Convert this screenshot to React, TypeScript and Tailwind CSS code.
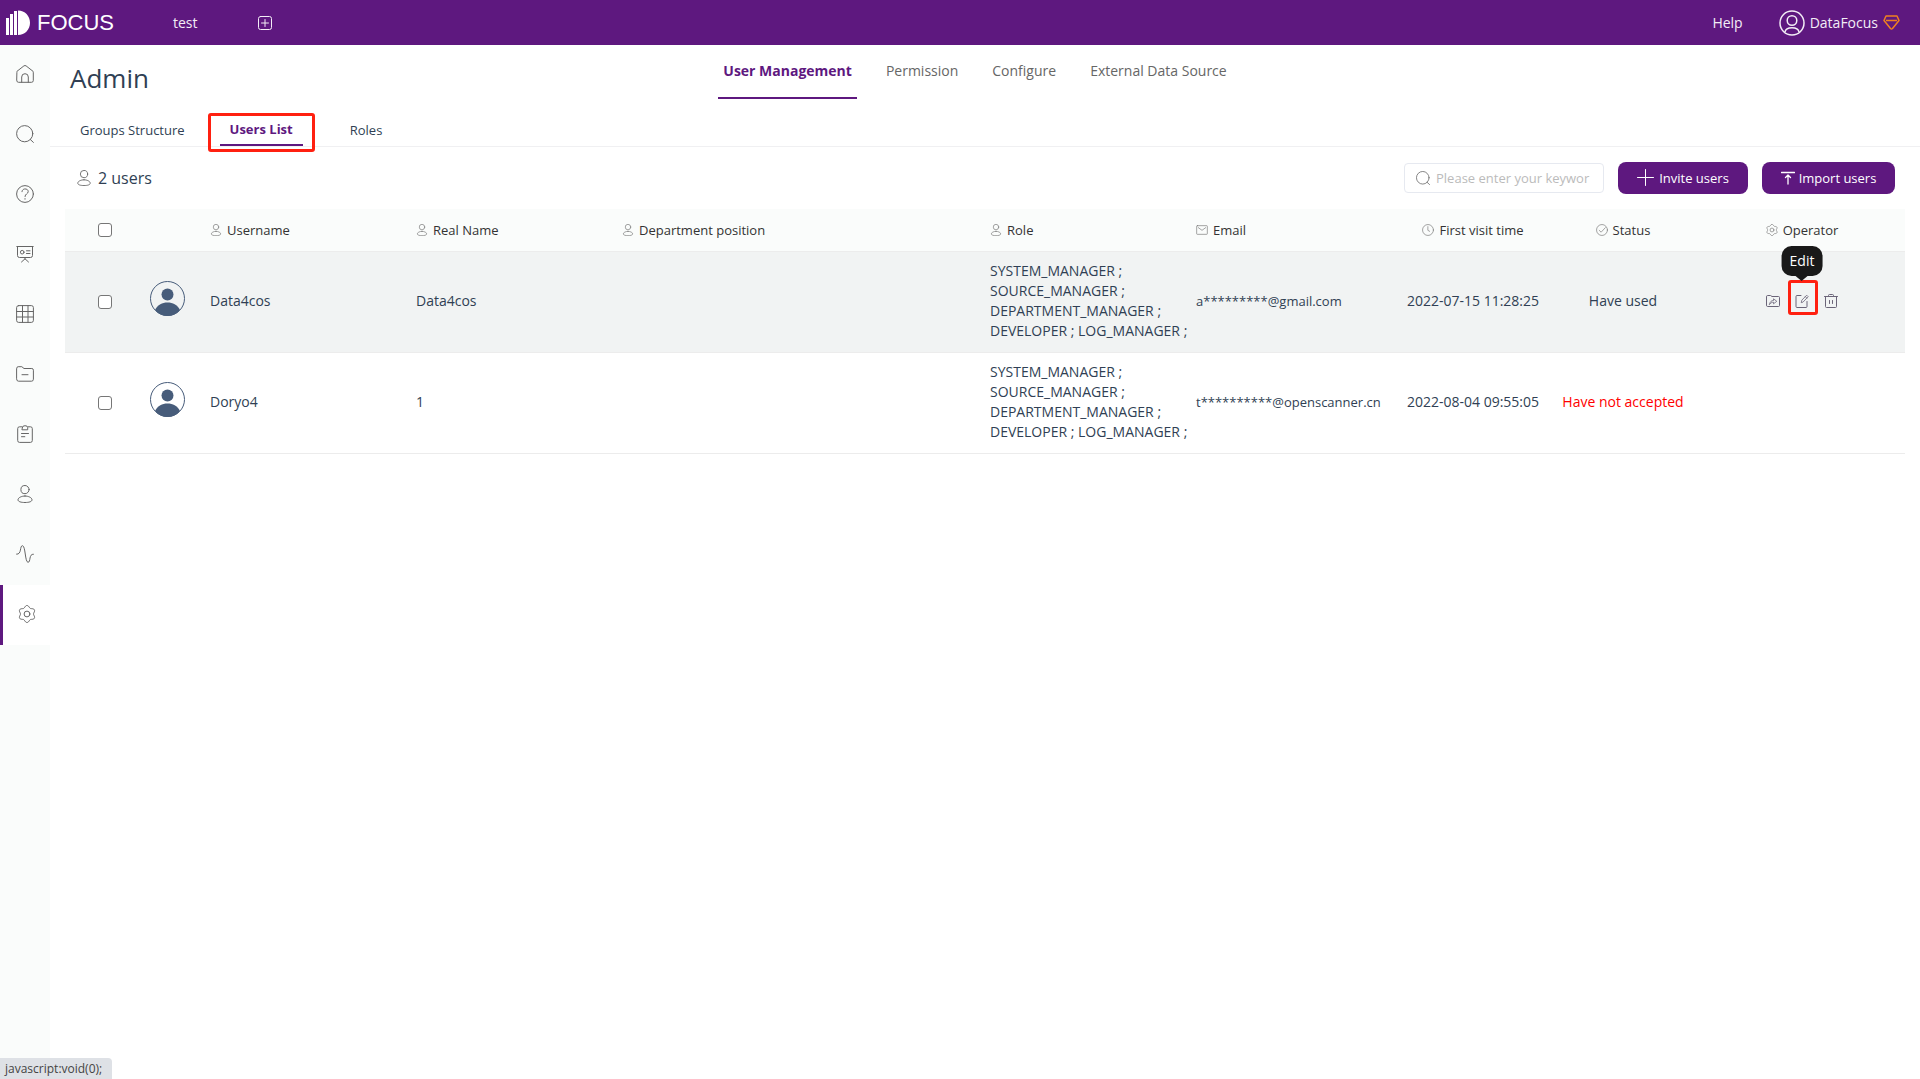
import type { ReactNode } from "react";

type IconProps = { className?: string };

function Svg({ className = "size-[18px]", box = 18, children }: IconProps & { box?: number; children: ReactNode }) {
  return (
    <svg
      className={`shrink-0 ${className}`}
      viewBox={`0 0 ${box} ${box}`}
      fill="none"
      stroke="currentColor"
      strokeWidth="1"
      strokeLinecap="round"
      strokeLinejoin="round"
      aria-hidden="true"
    >
      {children}
    </svg>
  );
}

const HomeIcon = (p: IconProps) => (
  <Svg {...p}>
    <path d="M.7 7.2Q.5 6.800 1 6.300L7.900.9Q9 .1 10.100.9L17 6.300Q17.500 6.800 17.300 7.200V15.500Q17.300 17.300 15.500 17.300H2.500Q.7 17.300.7 15.500Z" />
    <path d="M5.700 17.200V12a3.300 3.300 0 0 1 6.600 0V17.200" />
  </Svg>
);
const SearchIcon = (p: IconProps) => (
  <Svg {...p}>
    <circle cx="8.700" cy="8.700" r="8.100" />
    <path d="M14.300 14.500 17.400 17.400" />
  </Svg>
);
const HelpIcon = (p: IconProps) => (
  <Svg {...p}>
    <circle cx="9" cy="9" r="8.400" />
    <path d="M6 6.700C6 2.900 12.200 3 12.200 6.600 12.200 9 9 8.700 9 11.500M9 13.600V14.200" />
  </Svg>
);
const BoardIcon = (p: IconProps) => (
  <Svg {...p}>
    <path d="M.8 1.500H17.200M1.500 1.500V10.500Q1.500 12.500 3.500 12.500H14.500Q16.500 12.500 16.500 10.500V1.500M9 12.500V14M5.500 17 9 13.800 12.500 17" />
    <circle cx="6.200" cy="7.200" r="1.800" />
    <path d="M10.500 5.800H14M10.500 8.500H14" />
  </Svg>
);
const GridIcon = (p: IconProps) => (
  <Svg {...p}>
    <rect x=".6" y=".6" width="16.800" height="16.800" rx="2" />
    <path d="M6.500.6V17.400M12 .6V17.400M.6 6.500H17.400M.6 12H17.400" />
  </Svg>
);
const FolderIcon = (p: IconProps) => (
  <Svg {...p}>
    <path d="M.6 3.500Q.6 1.700 2.200 1.700H5.800L8 3.500H15.800Q17.400 3.500 17.400 5.200V14.200Q17.400 16.200 15.500 16.200H2.500Q.6 16.200.6 14.200ZM6 9.700H12" />
  </Svg>
);
const ClipboardIcon = (p: IconProps) => (
  <Svg {...p}>
    <path d="M6 1.800H3.500Q1.700 1.800 1.700 3.600V15.500Q1.700 17.400 3.500 17.400H14.500Q16.300 17.400 16.300 15.500V3.600Q16.300 1.800 14.500 1.800H12" />
    <path d="M6.300 2.600Q6.300.7 9 .7T11.700 2.600V4.800H6.300ZM5.500 8.500H12.500M5.500 11.700H8.800" />
  </Svg>
);
const PersonIcon = (p: IconProps) => (
  <Svg {...p}>
    <circle cx="9" cy="4.600" r="4.100" />
    <path d="M9 11C5.500 11 2 12.700 2 14.800 2 16.700 5.200 17.500 9 17.500S16 16.700 16 14.800C16 12.700 12.500 11 9 11Z" />
  </Svg>
);
const PulseIcon = (p: IconProps) => (
  <Svg {...p}>
    <path d="M.6 9.200C6 9.700 3.500.7 6.500.7S9 17.300 12 17.300C15 17.300 12.500 8.700 17.400 9.200" />
  </Svg>
);

// Six-lobed gear outline, one point every five degrees.
const gearOutline = Array.from({ length: 72 }, (_, i) => {
  const a = (i * Math.PI) / 36;
  const r = 7.5 + Math.cos(6 * a);
  return `${(9 + r * Math.sin(a)).toFixed(2)},${(9 - r * Math.cos(a)).toFixed(2)}`;
}).join(" ");

const GearIcon = (p: IconProps) => (
  <Svg {...p}>
    <circle cx="9" cy="9" r="2.900" />
    <polygon points={gearOutline} />
  </Svg>
);
const MailIcon = (p: IconProps) => (
  <Svg {...p}>
    <rect x="1" y="2.500" width="16" height="13" rx="1" />
    <path d="M3.500 5.500 9 9.500 14.500 5.500" />
  </Svg>
);
const ClockIcon = (p: IconProps) => (
  <Svg {...p}>
    <circle cx="9" cy="9" r="8.200" />
    <path d="M8.800 4V9.500L11.500 11" />
  </Svg>
);
const CheckIcon = (p: IconProps) => (
  <Svg {...p}>
    <circle cx="9" cy="9" r="8.200" />
    <path d="M4.800 9.500 7.700 12.300 14 5.500" />
  </Svg>
);
const AddBoxIcon = (p: IconProps) => (
  <Svg box={14} {...p}>
    <rect x=".5" y=".5" width="13" height="13" rx="2" />
    <path d="M7 3.500V10.500M3.500 7H10.500" />
  </Svg>
);
const ShareFolderIcon = (p: IconProps) => (
  <Svg box={14} {...p}>
    <path d="M.5 2.500Q.5 1.500 1.500 1.500H4.500L6 2.500H12.500Q13.500 2.500 13.500 3.500V11.500Q13.500 12.500 12.500 12.500H1.500Q.5 12.500.5 11.500Z" />
    <path d="M3.500 10.300C4 7.500 5.500 6.500 7.500 6.500V4.800L10.800 7.300 7.500 9.800V8.200C5.800 8.200 4.500 9 3.500 10.300Z" strokeWidth=".8" />
  </Svg>
);
const EditIcon = (p: IconProps) => (
  <Svg box={14} {...p}>
    <path d="M6 1.500H2Q1 1.500 1 2.500V12.500Q1 13.500 2 13.500H11Q12 13.500 12 12.500V7.500" />
    <path d="M6.300 8.300 6.800 6.200 11.700 1.200 13.200 2.700 8.300 7.800ZM10.300 2.600 11.800 4.100" strokeWidth=".8" />
  </Svg>
);
const TrashIcon = (p: IconProps) => (
  <Svg box={14} {...p}>
    <path d="M.5 2.500H13.500M4.500 2.500V1.500Q4.500.5 5.500.5H8.500Q9.500.5 9.500 1.500V2.500M1.500 2.500V12.500Q1.500 13.500 2.500 13.500H11.500Q12.500 13.500 12.500 12.500V2.500M5.500 6.500V9.500M8.500 6.500V9.500" />
  </Svg>
);
const PlusIcon = (p: IconProps) => (
  <Svg {...p}>
    <path d="M8.500.5V16.500M.5 8.500H16.500" />
  </Svg>
);
const UploadIcon = (p: IconProps) => (
  <Svg box={14} {...p}>
    <path d="M.5 1.500H13.500M7 4V13M4.500 6.500 7 4 9.500 6.500" strokeWidth="1.300" />
  </Svg>
);

function Logo() {
  return (
    <a href="#home" className="flex w-[173px] items-center gap-[7px] pl-[6px] text-white">
      <svg className="h-[26px] w-6" viewBox="0 0 24 26" fill="currentColor" aria-hidden="true">
        <path d="M0 8H3V25H0ZM4 4H7V25H4ZM8 1H11V25H8ZM12 .5C19 .5 24 6 24 12.700S19 25 12 25Z" />
      </svg>
      <span className="font-['Liberation_Sans',sans-serif] text-[22px] leading-6">FOCUS</span>
    </a>
  );
}

function AccountIcon() {
  return (
    <svg className="size-[26px]" viewBox="0 0 26 26" fill="none" stroke="currentColor" strokeWidth="1.500" aria-hidden="true">
      <circle cx="13" cy="13" r="12" />
      <circle cx="13" cy="10.500" r="4.800" />
      <path d="M6 22C6.500 19 9 17.700 13 17.700S19.500 19 20 22" />
    </svg>
  );
}

function DiamondIcon() {
  return (
    <svg className="h-[15px] w-[17px]" viewBox="0 0 17 15" fill="none" stroke="#f08020" strokeWidth="1.500" strokeLinejoin="round" aria-hidden="true">
      <path d="M3 1H14L16 5.500 9.500 13.500Q8.500 14.500 7.500 13.500L1 5.500ZM3 5.500H14" />
    </svg>
  );
}

function Avatar() {
  return (
    <svg className="mb-[6px] inline-block size-[35px]" viewBox="0 0 35 35" fill="#475c7a" aria-hidden="true">
      <circle cx="17.500" cy="17.500" r="17" fill="none" stroke="#475c7a" />
      <circle cx="17.500" cy="13.500" r="6" />
      <path d="M5 29C8 23.500 12 21.500 17.500 21.500S27 23.500 30 29C26.500 33 22.500 35 17.500 35S8.500 33 5 29Z" />
    </svg>
  );
}

const navItems = [
  { label: "Home", Icon: HomeIcon },
  { label: "Search", Icon: SearchIcon },
  { label: "Help", Icon: HelpIcon },
  { label: "Boards", Icon: BoardIcon },
  { label: "Tables", Icon: GridIcon },
  { label: "Folders", Icon: FolderIcon },
  { label: "Tasks", Icon: ClipboardIcon },
  { label: "Account", Icon: PersonIcon },
  { label: "Monitoring", Icon: PulseIcon },
  { label: "Admin", Icon: GearIcon, active: true },
];

const mainTabs = ["User Management", "Permission", "Configure", "External Data Source"];

const roles = ["SYSTEM_MANAGER ;", "SOURCE_MANAGER ;", "DEPARTMENT_MANAGER ;", "DEVELOPER ; LOG_MANAGER ;"];

const users = [
  { username: "Data4cos", realName: "Data4cos", email: "a*********@gmail.com", visit: "2022-07-15 11:28:25", status: "Have used", hovered: true },
  { username: "Doryo4", realName: "1", email: "t**********@openscanner.cn", visit: "2022-08-04 09:55:05", status: "Have not accepted", hovered: false },
];

const columns = [
  { label: "Username", Icon: PersonIcon },
  { label: "Real Name", Icon: PersonIcon },
  { label: "Department position", Icon: PersonIcon },
  { label: "Role", Icon: PersonIcon },
  { label: "Email", Icon: MailIcon },
  { label: "First visit time", Icon: ClockIcon, centered: true },
  { label: "Status", Icon: CheckIcon, centered: true },
  { label: "Operator", Icon: GearIcon, centered: true },
];

function Checkbox({ label }: { label: string }) {
  return (
    <input
      type="checkbox"
      aria-label={label}
      className="mx-auto block size-[14px] appearance-none rounded-[3px] border border-[#767676] bg-white checked:bg-[#5e187f]"
    />
  );
}

function RowActions() {
  return (
    <div className="flex items-center justify-center gap-[15px] text-[#6b6478]">
      <button aria-label="Share"><ShareFolderIcon className="block size-[14px]" /></button>
      <button aria-label="Edit" className="relative">
        <EditIcon className="block size-[14px]" />
        <span className="absolute -top-[14px] -right-[9px] -bottom-[7px] -left-[7px] rounded-[3px] border-[3px] border-[#ff2010]" />
        <span role="tooltip" className="absolute bottom-8 left-1/2 -translate-x-1/2 rounded-[10px] bg-[#191919] px-2 py-[5px] leading-5 text-white">
          Edit
          <span className="absolute top-full left-1/2 -translate-x-1/2 border-x-[6px] border-t-[5px] border-x-transparent border-t-[#191919]" />
        </span>
      </button>
      <button aria-label="Delete"><TrashIcon className="block size-[14px]" /></button>
    </div>
  );
}

function UsersTable() {
  return (
    <table className="w-full table-fixed border-collapse text-left text-[#303f54]">
      <colgroup>
        <col className="w-20" />
        <col className="w-[55px]" />
        <col className="w-[206px]" />
        <col className="w-[206px]" />
        <col />
        <col className="w-[206px]" />
        <col className="w-[213px]" />
        <col className="w-[148px]" />
        <col className="w-[152px]" />
        <col className="w-[206px]" />
      </colgroup>
      <thead>
        <tr className="h-[42px] border-b border-[#ececec] bg-[#fafcfb] text-[13px] text-[#333]">
          <th><Checkbox label="Select all users" /></th>
          <th />
          {columns.map(({ label, Icon, centered }) => (
            <th key={label} className="px-[10px] font-normal">
              <span className={`flex items-center gap-[5px] ${centered ? "justify-center" : ""}`}>
                <Icon className="size-3 text-[#777]" />
                {label}
              </span>
            </th>
          ))}
        </tr>
      </thead>
      <tbody>
        {users.map((u) => (
          <tr key={u.username} className={`h-[101px] border-b border-[#ececec] ${u.hovered ? "bg-[#f1f3f3]" : ""}`}>
            <td><Checkbox label={`Select ${u.username}`} /></td>
            <td className="pr-[10px] text-center"><Avatar /></td>
            <td className="px-[10px] pb-[2px]">{u.username}</td>
            <td className="px-[10px] pb-[2px]">{u.realName}</td>
            <td />
            <td className="pb-[2px] pl-[10px] whitespace-nowrap">
              {roles.map((r) => <div key={r}>{r}</div>)}
            </td>
            <td className="pb-[2px] pl-[10px] text-[13px] whitespace-nowrap">{u.email}</td>
            <td className="pb-[2px] text-center whitespace-nowrap">{u.visit}</td>
            <td className={`pb-[2px] text-center ${u.hovered ? "" : "text-[#ff0000]"}`}>{u.status}</td>
            <td className="pb-[2px]">{u.hovered && <RowActions />}</td>
          </tr>
        ))}
      </tbody>
    </table>
  );
}

export default function App() {
  return (
    <div className="relative flex min-h-screen flex-col bg-white font-['Open_Sans',sans-serif] text-sm leading-5 text-[#303f54]">
      <header className="flex h-[45px] items-center bg-[#5e187f] text-[#f3edf6]">
        <Logo />
        <a href="#test">test</a>
        <button aria-label="New tab" className="ml-[60px]"><AddBoxIcon className="block size-[14px]" /></button>
        <a href="#help" className="ml-auto">Help</a>
        <button className="mr-5 ml-9 flex items-center gap-[5px]">
          <AccountIcon />
          <span>DataFocus</span>
          <DiamondIcon />
        </button>
      </header>

      <div className="flex flex-1">
        <nav className="w-[50px] shrink-0 bg-[#fafcfb] text-[#666]">
          {navItems.map(({ label, Icon, active }) => (
            <a
              key={label}
              href={`#${label.toLowerCase()}`}
              aria-label={label}
              className={`flex h-[60px] items-center justify-center pb-[2px] ${active ? "border-l-[3px] border-[#5e187f] bg-white" : ""}`}
            >
              <Icon className="size-[18px]" />
            </a>
          ))}
        </nav>

        <main className="min-w-0 flex-1">
          <div className="grid grid-cols-[1fr_auto_1fr] pr-10 pl-5">
            <h1 className="pt-[15px] text-[26px] leading-9">Admin</h1>
            <nav className="flex gap-6">
              {mainTabs.map((t, i) => (
                <a
                  key={t}
                  href="#admin"
                  className={`h-[54px] px-[5px] pt-4 text-sm ${i === 0 ? "border-b-2 border-[#5e187f] font-bold text-[#5e187f]" : "text-[#666]"}`}
                >
                  {t}
                </a>
              ))}
            </nav>
          </div>

          <nav className="mt-[7px] flex h-[41px] items-end border-b border-[#f0f0f2] pl-[30px] text-[13px]">
            <a href="#groups" className="pb-[6px]">Groups Structure</a>
            <a href="#users" className="relative ml-[35px] flex h-8 items-center border-b-2 border-[#5e187f] px-[10px] font-bold text-[#5e187f]">
              Users List
              <span className="absolute -inset-x-3 -top-px -bottom-[8px] rounded-[3px] border-[3px] border-[#ff2010]" />
            </a>
            <a href="#roles" className="ml-[47px] pb-[6px]">Roles</a>
          </nav>

          <div className="flex h-[62px] items-center pr-[25px] pl-[26px]">
            <PersonIcon className="size-4 text-[#666]" />
            <span className="ml-[6px] text-base">2 users</span>
            <label className="ml-auto flex h-[30px] w-[200px] items-center gap-[6px] rounded-[4px] border border-[#e6e9f0] px-[11px] text-[#666]">
              <SearchIcon className="size-[14px]" />
              <input
                type="text"
                aria-label="Search users"
                placeholder="Please enter your keywor"
                className="min-w-0 flex-1 bg-transparent text-[13px] outline-none placeholder:text-[#bbb]"
              />
            </label>
            <button className="ml-[14px] flex h-8 w-[130px] items-center justify-center gap-1 rounded-lg bg-[#5e187f] text-[13px] text-white">
              <PlusIcon className="size-[18px]" />
              Invite users
            </button>
            <button className="ml-[14px] flex h-8 w-[133px] items-center justify-center gap-1 rounded-lg bg-[#5e187f] text-[13px] text-white">
              <UploadIcon className="size-[14px]" />
              Import users
            </button>
          </div>

          <div className="px-[15px]">
            <UsersTable />
          </div>
        </main>
      </div>

      <div className="absolute bottom-0 left-0 rounded-tr-[4px] bg-[#dee1e6] pr-[10px] pl-[5px] text-xs leading-[21px] text-[#444]">
        javascript:void(0);
      </div>
    </div>
  );
}
